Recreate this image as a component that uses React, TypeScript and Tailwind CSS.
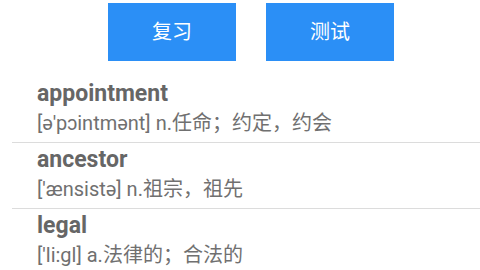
const words = [
  { word: 'appointment', phonetic: "[ə'pɔintmənt]", meaning: 'n.任命；约定，约会' },
  { word: 'ancestor', phonetic: "['ænsistə]", meaning: 'n.祖宗，祖先' },
  { word: 'legal', phonetic: "['li:gl]", meaning: 'a.法律的；合法的' },
]

export default function App() {
  return (
    <div className="w-[480px] h-[270px] overflow-hidden bg-white font-['Roboto','Noto_Sans_CJK_SC',sans-serif]">
      {/* Actions */}
      <div className="flex gap-[30px] pl-[108px] pt-[3px]">
        <button className="w-[128px] h-[58px] bg-[#2b8ff6] text-white text-[20px] flex items-center justify-center">
          复习
        </button>
        <button className="w-[128px] h-[58px] bg-[#2b8ff6] text-white text-[20px] flex items-center justify-center">
          测试
        </button>
      </div>

      {/* Word list */}
      <div className="mt-[16px] ml-[12px]">
        {words.map((w, i) => (
          <div
            key={w.word}
            className={`pl-[25px] pt-[3px] pb-[6px] ${i < words.length - 1 ? 'border-b border-[#dcdcdc]' : ''}`}
          >
            <div className="text-[23px] leading-[27px] font-bold text-[#666666]">{w.word}</div>
            <div className="mt-[4px] text-[20px] leading-[25px] text-[#707070]">
              {w.phonetic} {w.meaning}
            </div>
          </div>
        ))}
      </div>
    </div>
  )
}
